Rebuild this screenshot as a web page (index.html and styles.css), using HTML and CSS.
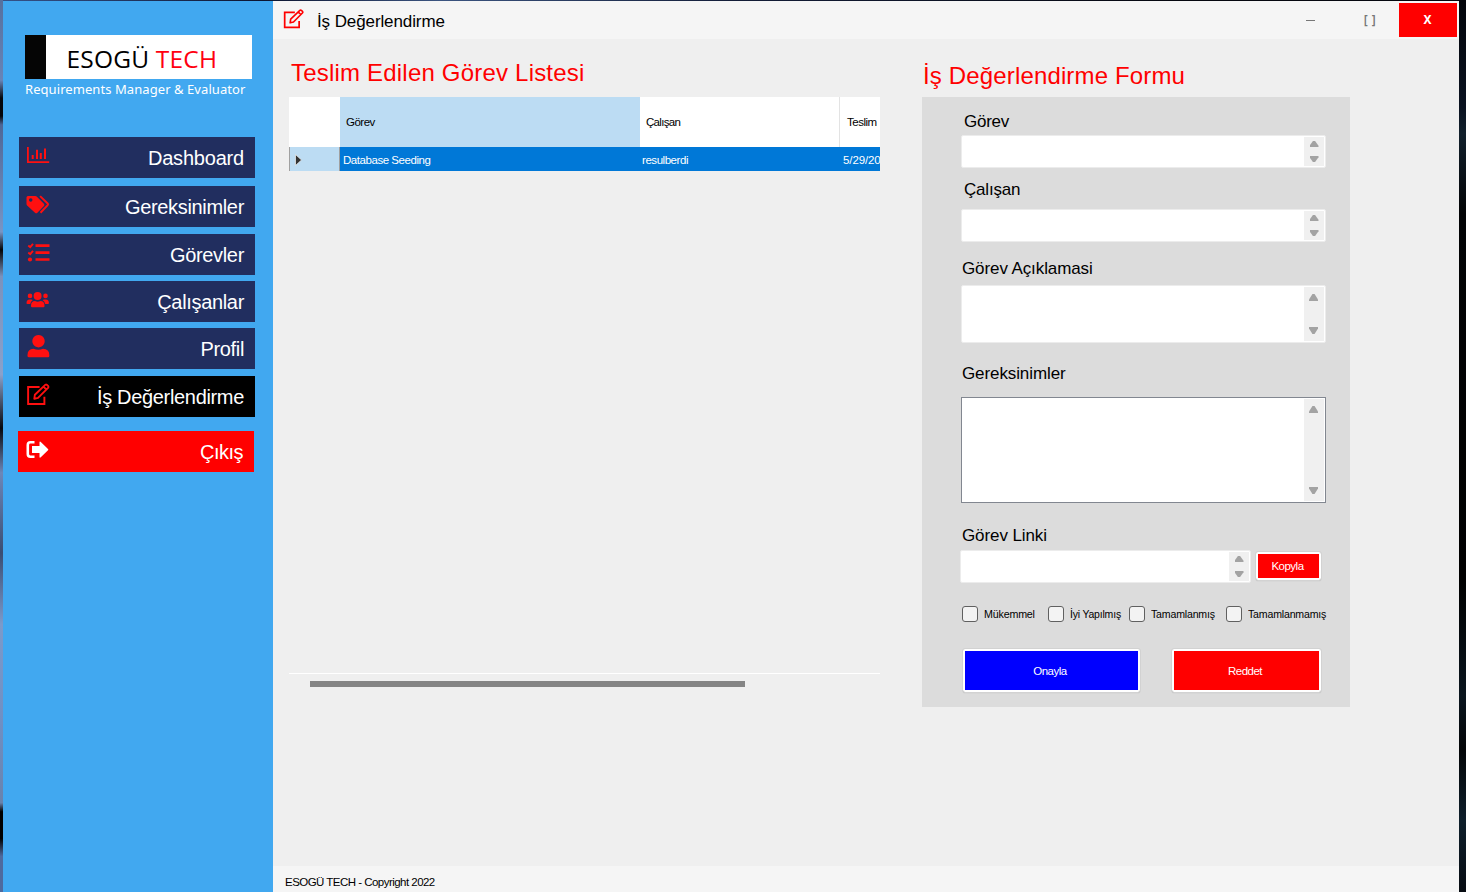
FILE: index.html
```
<!DOCTYPE html>
<html lang="tr">
<head>
<meta charset="utf-8">
<title>İş Değerlendirme</title>
<link rel="stylesheet" href="styles.css">
</head>
<body>
<svg class="defs" width="0" height="0">
  <symbol id="edit" viewBox="0 0 22 22"><path d="M12.500 3.700H1.300v16.500h15.900v-7" fill="none" stroke="currentColor" stroke-width="1.900"/><path d="M7.300 15.200l.6-4L18 1.600q.9-.8 1.900.1l.9.9q.9.900 0 1.800L11 14.300zM16.300 3.300l3 3" fill="none" stroke="currentColor" stroke-width="1.800" stroke-linejoin="round"/></symbol>
</svg>
<div class="window">
  <aside class="sidebar">
    <div class="logo"><div class="logo-bar"></div><div class="logo-text">ESOGÜ <span>TECH</span></div></div>
    <div class="tagline">Requirements Manager &amp; Evaluator</div>
    <nav class="nav">
      <a class="item"><svg class="icon" viewBox="0 0 24 24"><path d="M1.900 3v15.200h21.300" fill="none" stroke="currentColor" stroke-width="1.800"/><path d="M6.700 11v4M11 5.800V15M14.800 9v6M19 4.600V15" stroke="currentColor" stroke-width="2"/></svg><span>Dashboard</span></a>
      <a class="item g8"><svg class="icon" viewBox="0 0 24 24"><path fill="currentColor" fill-rule="evenodd" d="M.5 4.500Q.5 3 2 3h7.300q.8 0 1.400.6l7.200 7.200q1 1.200 0 2.300l-6.500 6.600q-1.200 1.100-2.400 0L1.100 12.400Q.5 11.800.5 11zM4.700 5.200a1.750 1.750 0 1 0 .01 0z"/><path d="M12.500 3.800l7.600 7.400q.8.800 0 1.600l-7.200 7.600" transform="translate(1.600 -.7)" fill="none" stroke="currentColor" stroke-width="2"/></svg><span>Gereksinimler</span></a>
      <a class="item g7"><svg class="icon" viewBox="0 0 24 24"><path d="M2.300 4.500l1.900 1.700L7 2.800M2.300 11.500l1.900 1.700L7 9.800" fill="none" stroke="currentColor" stroke-width="1.900"/><circle cx="4" cy="18.500" r="2.100" fill="currentColor"/><path d="M9.500 4.600h14M9.500 11.600h14M9.500 18.500h14" stroke="currentColor" stroke-width="2.600"/></svg><span>Görevler</span></a>
      <a class="item g6"><svg class="icon" viewBox="0 0 24 24"><g fill="currentColor"><circle cx="11.600" cy="7.900" r="4"/><circle cx="4" cy="7.900" r="2.300"/><circle cx="19.500" cy="7.900" r="2.300"/><path d="M5 19.300v-1.600q0-4.600 4-4.600 2.600 1.100 5.500 0 4 0 4 4.600v.6q0 1-1 1H6q-1 0-1-1zM.5 15.200q0-3.700 3-3.700h1.800q1 0 1.500.5Q4.600 13.400 4.200 16H1.500q-1 0-1-.8zM22.900 15.200q0-3.700-3-3.700h-1.800q-1 0-1.500.5 2.200 1.400 2.600 4h2.700q1 0 1-.8z"/></g></svg><span>Çalışanlar</span></a>
      <a class="item g6"><svg class="icon" viewBox="0 0 24 24"><path fill="currentColor" d="M12.500 0a6.200 6.200 0 1 0 .01 0zM1.500 20q0-6 6-6.200 5 2 9.500 0 6.300.2 6.300 6.200v1q0 1.200-1.300 1.200H3q-1.500 0-1.500-1.200z"/></svg><span>Profil</span></a>
      <a class="item active g7"><svg class="icon" viewBox="0 0 24 24"><use href="#edit" x="0.300" y="0.300" width="23.500" height="22.500"/></svg><span>İş Değerlendirme</span></a>
      <a class="item exit"><svg class="icon" viewBox="0 0 24 24"><path d="M9.500 4.300H5.400Q2.800 4.300 2.800 7v9q0 2.700 2.600 2.700h4.100" fill="none" stroke="currentColor" stroke-width="2.600"/><path fill="currentColor" d="M7 8h7.500V4.500q0-1.500 1.300-.6l7.200 7q.7.700 0 1.400l-7.200 7q-1.300.9-1.300-.6V15H7z"/></svg><span>Çıkış</span></a>
    </nav>
  </aside>
  <main class="main">
    <header class="titlebar">
      <svg class="title-icon"><use href="#edit"/></svg>
      <span class="title">İş Değerlendirme</span>
      <span class="control min"></span>
      <span class="control max">[ ]</span>
      <span class="control close">X</span>
    </header>
    <div class="content">
      <section class="tasks">
        <h1>Teslim Edilen Görev Listesi</h1>
        <div class="grid">
          <div class="head"><div></div><div class="sorted">Görev</div><div class="tight">Çalışan</div><div class="last">Teslim</div></div>
          <div class="row"><div class="marker"><svg width="9" height="12" viewBox="0 0 9 12"><path d="M1.500 .5l6 5.500-6 5.500z" fill="#333" stroke="#f4f4f4" stroke-width=".7"/></svg></div><div>Database Seeding</div><div>resulberdi</div><div>5/29/2022</div></div>
        </div>
        <div class="hscroll"><div class="thumb"></div></div>
      </section>
      <section class="review">
        <h1>İş Değerlendirme Formu</h1>
        <div class="form">
          <label class="l1">Görev</label>
          <div class="field f1"><div class="spin"><i></i><i class="down"></i></div></div>
          <label class="l2">Çalışan</label>
          <div class="field f2"><div class="spin"><i></i><i class="down"></i></div></div>
          <label class="l3">Görev Açıklamasi</label>
          <div class="field f3"><div class="spin big"><i></i><i class="down"></i></div></div>
          <label class="l4">Gereksinimler</label>
          <div class="field f4"><div class="spin big"><i></i><i class="down"></i></div></div>
          <label class="l5">Görev Linki</label>
          <div class="link"><div class="field f5"><div class="spin"><i></i><i class="down"></i></div></div><div class="btn copy">Kopyla</div></div>
          <div class="checks">
            <span class="check c1"><b></b><span>Mükemmel</span></span><span class="check c2"><b></b><span>İyi Yapılmış</span></span><span class="check c3"><b></b><span>Tamamlanmış</span></span><span class="check c4"><b></b><span>Tamamlanmamış</span></span>
          </div>
          <div class="actions"><div class="btn approve">Onayla</div><div class="btn reject">Reddet</div></div>
        </div>
      </section>
    </div>
    <footer class="footer">ESOGÜ TECH - Copyright 2022</footer>
  </main>
</div>
</body>
</html>
```
FILE: styles.css
```
* { box-sizing: border-box; }
body {
  margin: 0;
  width: 1466px;
  height: 892px;
  overflow: hidden;
  padding: 1px 7px 0 3px;
  font-family: "Liberation Sans", Arial, sans-serif;
  font-size: 11.5px;
  white-space: nowrap;
  color: #000;
  background:
    linear-gradient(180deg, #03050a 0, #0a1220 12%, #12202c 15%, #020305 24%, #000 65%, #0a151e 78%, #030507 84%, #0e1f2b 92%, #070c12 100%) right / 7px 100% no-repeat,
    linear-gradient(180deg, #56719f 0, #6784b7 9%, #05070c 11%, #03050a 13%, #4e6797 14%, #7795c5 26%, #030405 28%, #7a92bd 31%, #8aa1cb 42%, #06080e 48%, #6c87b9 53%, #3a4d72 62%, #7b9acb 70%, #6f8fc3 81%, #6883ad 90%, #000 91%, #000 94%, #4e6a9e 96%) left / 3px 100% no-repeat,
    linear-gradient(90deg, #35538a 0, #0b1430 18%, #3b5480 30%, #131d38 50%, #05070f 80%);
}
.defs { position: absolute; }
.window { display: flex; height: 891px; }

.sidebar { width: 270px; flex: none; background: #41a8f0; padding-top: 34px; }
.logo { display: flex; width: 227px; height: 44px; margin-left: 22px; background: #fff; }
.logo-bar { width: 21px; background: #050505; }
.logo-text {
  padding-left: 20.5px;
  font: 400 24.5px/47px "Open Sans", "Noto Sans", sans-serif;
  letter-spacing: 0.2px;
}
.logo-text span { color: #ff0010; }
.tagline {
  margin: 0 0 0 22px;
  height: 58px;
  color: #fff;
  font: 13px/21px "Noto Sans", sans-serif;
  letter-spacing: 0.07px;
}
.nav { padding-left: 16px; }
.item {
  display: flex;
  justify-content: space-between;
  width: 236px;
  height: 41px;
  padding: 0 11px 0 7px;
  background: #212e5f;
  color: #fff;
  font-size: 20px;
  line-height: 42px;
  letter-spacing: -0.33px;
}
.item:first-child { letter-spacing: -0.2px; }
.icon { width: 24px; height: 24px; margin-top: 7px; color: #ff1010; }
.g8 { margin-top: 8px; }
.g7 { margin-top: 7px; }
.g6 { margin-top: 6px; }
.active { background: #000; }
.exit { margin: 14px 0 0 -1px; background: #f00; letter-spacing: -0.5px; }
.exit .icon { color: #fff; }

.main { flex: 1; display: flex; flex-direction: column; min-width: 0; background: #efefef; }
.titlebar { display: flex; height: 38px; flex: none; padding: 2px 2px 0 10px; background: #f5f5f5; }
.title-icon { width: 21px; height: 20px; margin-top: 6px; color: #f00; }
.title { margin-left: 13px; font-size: 17px; line-height: 37px; letter-spacing: -0.1px; flex: 1; }
.control { flex: none; width: 58px; height: 34px; text-align: center; line-height: 34px; color: #777; }
.min::before { content: ""; display: block; width: 9px; height: 1px; margin: 17px 0 0 25px; background: #777; }
.max { width: 60px; font: 600 12px/33px "Noto Sans", sans-serif; letter-spacing: 0.5px; padding-left: 2px; }
.close { background: #f00; color: #fff; font: bold 12px/33px "Noto Sans", sans-serif; padding-right: 1px; }

.content { display: flex; flex: 1; padding-left: 16px; }
h1 { margin: 0; height: 58px; font-size: 24px; font-weight: 400; letter-spacing: 0.2px; color: #f00; padding-left: 2px; line-height: 68px; }
.tasks { width: 591px; flex: none; }
.grid { height: 576px; overflow: hidden; }
.head, .row { display: grid; grid-template-columns: 51px 300px 200px 100px; width: 591px; overflow: hidden; }
.head { height: 50px; line-height: 51px; background: #fff; letter-spacing: -0.5px; }
.head div { padding-left: 6px; }
.head .tight { letter-spacing: -0.7px; border-right: 1px solid #e3e3e3; }
.head .last { padding-left: 7px; }
.sorted { background: #bcdcf3; }
.row { height: 24px; line-height: 26px; color: #fff; background: #0078d7; letter-spacing: -0.45px; }
.row div { padding-left: 2px; }
.row div:nth-child(2) { padding-left: 3px; }
.row .marker { display: flex; align-items: center; padding-left: 4px; background: #bcdcf3; border: 1px solid #a0a0a0; border-width: 0 1px; }
.row div:last-child { padding-left: 3px; letter-spacing: -0.1px; }
.hscroll { border-top: 1px solid #fff; padding: 7px 0 0 21px; }
.thumb { width: 435px; height: 6px; background: #858585; }

.review { margin-left: 42px; width: 428px; }
.review h1 { line-height: 74px; letter-spacing: 0.15px; padding-left: 1px; }
.form { height: 610px; background: #dcdcdc; padding: 14px 0 0 38px; }
label { display: block; height: 24px; line-height: 22px; font-size: 17px; padding-left: 2px; letter-spacing: -0.1px; }
.l1, .l2 { padding-left: 4px; }
.l1 { letter-spacing: -0.25px; }
.l2 { margin-top: 11px; height: 30px; letter-spacing: -0.2px; }
.l3 { margin-top: 16px; height: 27px; }
.l4 { margin-top: 20px; height: 34px; }
.l5 { margin-top: 22px; height: 25px; }
.field { width: 365px; height: 33px; margin-left: 1px; padding: 1px; background: #fff; border: 1px solid #ececec; border-radius: 2px; display: flex; justify-content: flex-end; }
.f3 { height: 58px; }
.f4 { height: 106px; border-color: #828790; border-radius: 0; }
.spin { width: 20px; background: #f0f0f0; display: flex; flex-direction: column; justify-content: space-between; align-items: center; padding: 4px 0; }
.spin i { width: 9px; height: 6px; background: #a3a3a3; clip-path: polygon(38% 0, 62% 0, 100% 78%, 100% 100%, 0 100%, 0 78%); }
.spin .down { transform: scaleY(-1); }
.spin.big { padding: 7px 1px 7px 0; }
.spin.big i { height: 7px; }
.link { display: flex; }
.f5 { width: 291px; margin-left: 0; }
.btn { color: #fff; text-align: center; border: 2px solid #fff; border-radius: 2px; box-shadow: 0 1px 1px #aaa; outline: 1px solid #d2d2d2; letter-spacing: -0.5px; padding-right: 3px; }
.copy { width: 65px; height: 28px; line-height: 25px; margin: 2px 0 0 5px; background: #f00; padding-right: 2px; }
.checks { display: flex; margin: 23px 0 0 2px; }
.check { display: flex; height: 16px; line-height: 17px; letter-spacing: -0.2px; }
.check span { transform: scaleX(0.93); transform-origin: left; }
.check b { width: 16px; height: 16px; margin-right: 6px; border: 1px solid #606060; border-radius: 3px; background: #f3f3f3; flex: none; }
.c1 { width: 86px; }
.c2 { width: 81px; }
.c2 span { transform: scaleX(0.91); }
.c3 { width: 97px; }
.c3 span, .c4 span { transform: scaleX(0.92); }
.actions { display: flex; margin: 27px 0 0 3px; }
.approve { width: 177px; height: 43px; line-height: 41px; background: #00f; }
.reject { width: 149px; height: 43px; line-height: 41px; margin-left: 32px; background: #f00; }

.footer { height: 26px; flex: none; background: #f5f5f5; padding-left: 12px; line-height: 32px; letter-spacing: -0.53px; }
```
